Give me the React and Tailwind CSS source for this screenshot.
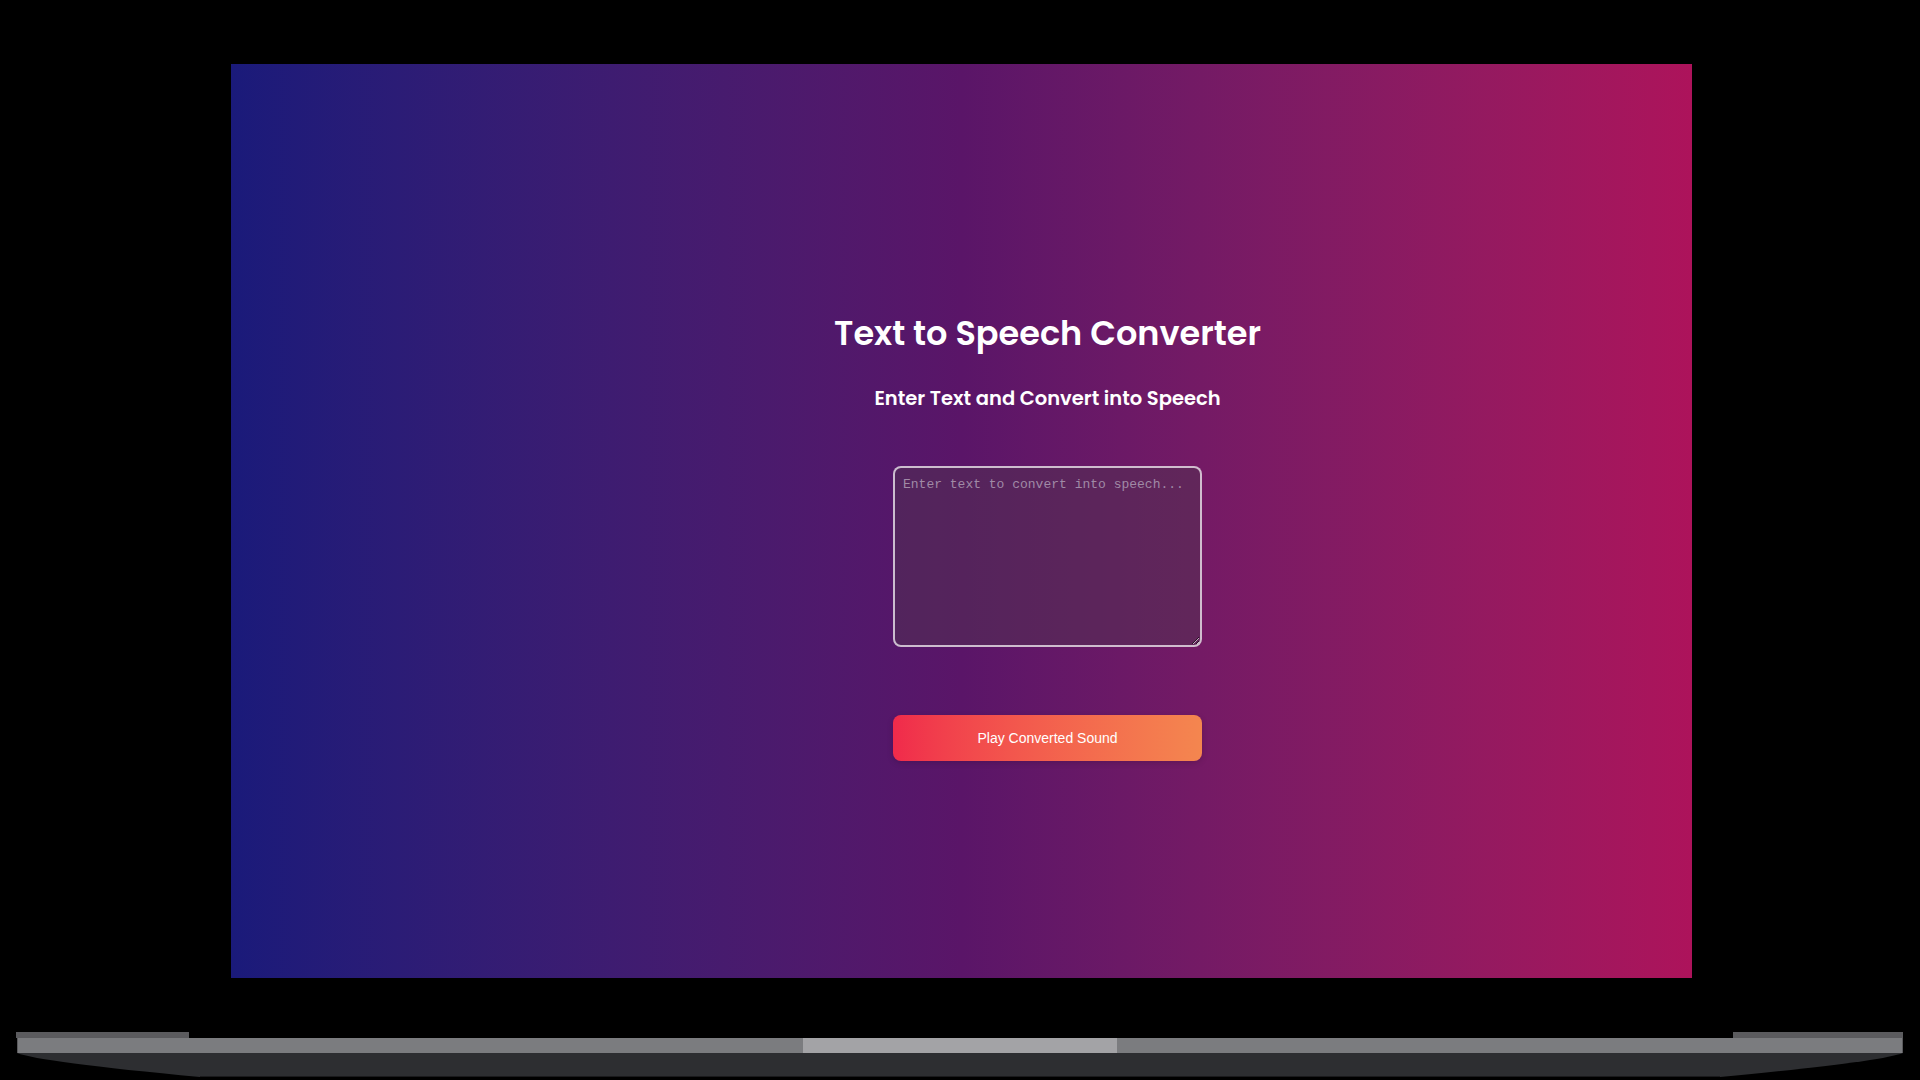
import { useState } from 'react';

// laptop base drawn under the screen
function LaptopBase() {
  return (
    <svg width="1920" height="48" viewBox="0 0 1920 48" className="block">
      <rect x="16" y="0" width="173" height="6" fill="#5b5b5e" />
      <rect x="1733" y="0" width="170" height="6" fill="#5b5b5e" />
      <path d="M17 21 L1903 21 Q1880 30 1720 45 L200 45 Q40 30 17 21 Z" fill="#2d2e31" />
      <rect x="200" y="44" width="1520" height="1" fill="#1a1a1c" />
      <rect x="17" y="6" width="1886" height="15" fill="#7b7c7f" />
      <rect x="803" y="6" width="314" height="15" fill="#a3a3a6" />
      <rect x="17" y="6" width="1" height="15" fill="#5a5a5d" />
      <rect x="1902" y="6" width="1" height="15" fill="#5a5a5d" />
    </svg>
  );
}

export default function App() {
  const [text, setText] = useState('');

  const handlePlay = () => {
    if (!text.trim() || typeof window === 'undefined' || !window.speechSynthesis) return;
    window.speechSynthesis.speak(new SpeechSynthesisUtterance(text));
  };

  return (
    <div className="w-[1920px] h-[1080px] bg-black overflow-hidden flex flex-col">
      {/* 화면 */}
      <div className="ml-[231px] mt-[64px] w-[1461px] h-[914px] bg-gradient-to-r from-[#1a1a7a] via-[#5a1568] to-[#ad135b] flex flex-col items-center pl-[172px] pt-[248px] font-['Poppins','Open_Sans',sans-serif] text-white">
        <h1 className="text-[33.5px] leading-[44px] font-semibold">Text to Speech Converter</h1>
        <h2 className="mt-[30px] text-[19.5px] leading-[26px] font-semibold">Enter Text and Convert into Speech</h2>

        <textarea
          value={text}
          onChange={(e) => setText(e.target.value)}
          placeholder="Enter text to convert into speech..."
          className="block mt-[54px] w-[309px] h-[181px] px-2 py-[7px] rounded-lg border-2 border-white/70 bg-[rgba(80,50,80,0.5)] font-['Liberation_Mono',monospace] text-[13px] text-white placeholder:text-[#a08aa6] outline-none"
        />

        <button
          onClick={handlePlay}
          className="mt-[68px] w-[309px] h-[46px] rounded-lg bg-gradient-to-r from-[#f02a4b] to-[#f4864f] font-['Liberation_Sans',Arial,sans-serif] text-[14px] text-white shadow-[0_2px_6px_rgba(0,0,0,0.15)]"
        >
          Play Converted Sound
        </button>
      </div>

      {/* 받침 */}
      <div className="mt-[54px]">
        <LaptopBase />
      </div>
    </div>
  );
}
